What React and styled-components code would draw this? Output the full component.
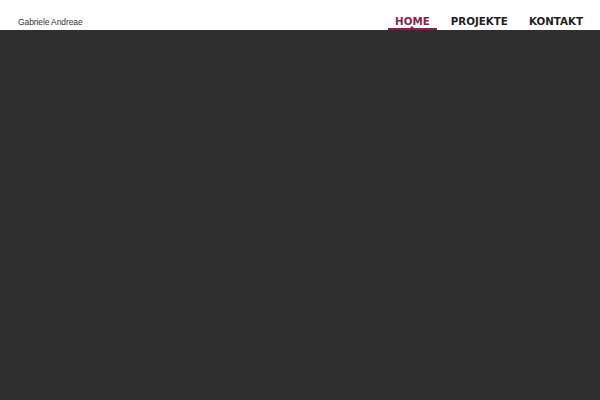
import React from "react";
import styled, { createGlobalStyle } from "styled-components";

const Global = createGlobalStyle`
  html, body { margin: 0; padding: 0; }
  body { background: #2f2f2f; width: 600px; height: 400px; overflow: hidden; }
`;

const Page = styled.div`
  width: 600px;
  height: 400px;
  display: flex;
  flex-direction: column;
  background: #2f2f2f;
`;

const Header = styled.header`
  height: 30px;
  background: #ffffff;
  display: flex;
  align-items: stretch;
  justify-content: space-between;
  padding: 0 10px 0 18px;
`;

const Logo = styled.div`
  font-family: "Liberation Sans", Arial, sans-serif;
  font-size: 8.5px;
  color: #333;
  align-self: flex-end;
  padding-bottom: 3px;
  letter-spacing: -0.1px;
`;

const Nav = styled.nav`
  display: flex;
  align-items: stretch;
  gap: 7px;
`;

const NavItem = styled.a`
  position: relative;
  display: flex;
  align-items: center;
  padding: 11px 7px 0;
  font-family: "DejaVu Sans", sans-serif;
  font-weight: bold;
  font-size: 10.3px;
  color: ${(p) => (p.$active ? "#8b1f4f" : "#1f1f1f")};
  text-decoration: none;
  &::after {
    content: "";
    display: ${(p) => (p.$active ? "block" : "none")};
    position: absolute;
    left: 0;
    right: 0;
    bottom: 0;
    height: 2px;
    background: #8b1f4f;
  }
  &::before {
    content: "";
    display: ${(p) => (p.$active ? "block" : "none")};
    position: absolute;
    left: 50%;
    bottom: 2px;
    margin-left: -2px;
    border-left: 2px solid transparent;
    border-right: 2px solid transparent;
    border-bottom: 2px solid #8b1f4f;
  }
`;

const Main = styled.main`
  flex: 1;
  background: #2f2f2f;
`;

export default function App() {
  return (
    <Page>
      <Global />
      <Header>
        <Logo>Gabriele Andreae</Logo>
        <Nav>
          <NavItem $active>HOME</NavItem>
          <NavItem>PROJEKTE</NavItem>
          <NavItem>KONTAKT</NavItem>
        </Nav>
      </Header>
      <Main />
    </Page>
  );
}
